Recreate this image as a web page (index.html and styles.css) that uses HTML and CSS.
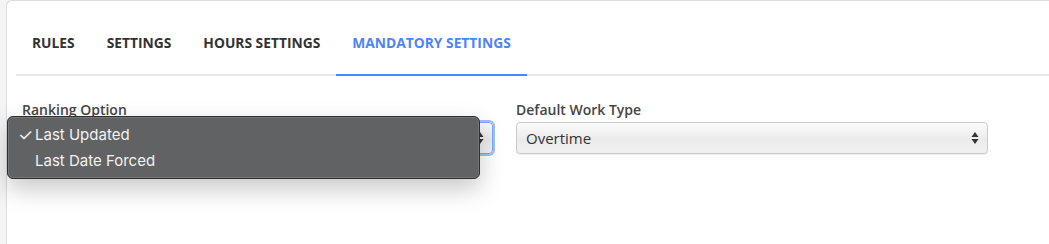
FILE: index.html
```html
<!DOCTYPE html>
<html lang="en">
<head>
    <meta charset="UTF-8">
    <title>Mandatory Settings</title>
    <link rel="stylesheet" href="styles.css">
</head>
<body>
    <div class="card">
        <ul class="tabs">
            <li>Rules</li>
            <li>Settings</li>
            <li>Hours Settings</li>
            <li class="active">Mandatory Settings</li>
        </ul>
        <div class="form-row">
            <div class="field">
                <label>Ranking Option</label>
                <div class="select focused">
                    <span>Last Updated</span>
                    <svg class="arrows" width="8" height="14" viewBox="0 0 8 14"><path d="M4 1 L7.5 6 H0.5 Z M4 13 L7.5 8 H0.5 Z" fill="#333"/></svg>
                </div>
            </div>
            <div class="field">
                <label>Default Work Type</label>
                <div class="select">
                    <span>Overtime</span>
                    <svg class="arrows" width="8" height="14" viewBox="0 0 8 14"><path d="M4 1 L7.5 6 H0.5 Z M4 13 L7.5 8 H0.5 Z" fill="#333"/></svg>
                </div>
            </div>
        </div>

        <!-- open native popup of the first select -->
        <div class="popup">
            <div class="popup-item"><span class="check">✓</span>Last Updated</div>
            <div class="popup-item"><span class="check"></span>Last Date Forced</div>
        </div>
    </div>
</body>
</html>
```

FILE: styles.css
```css
body {
    margin: 0;
    background-color: #f4f4f4;
    font-family: "Open Sans", Arial, sans-serif;
    color: #333;
}
.card {
    position: relative;
    margin-left: 6px;
    height: 243px;
    background: #ffffff;
    border-top: 1px solid #dcdcdc;
    border-left: 1px solid #dcdcdc;
    border-top-left-radius: 6px;
    padding-left: 9px;
}
.tabs {
    list-style: none;
    margin: 0;
    padding: 0;
    display: flex;
    border-bottom: 2px solid #e9e9e9;
}
.tabs li {
    padding: 33px 16px 22px;
    font-size: 13.8px;
    line-height: 18px;
    font-weight: 700;
    text-transform: uppercase;
    color: #333;
    margin-bottom: -2px;
    border-bottom: 2px solid transparent;
}
.tabs li.active {
    color: #4d84fb;
    border-bottom-color: #4d84fb;
}
.form-row {
    display: grid;
    grid-template-columns: 471px 472px;
    gap: 23px;
    padding: 24px 0 0 6px;
}
.field label {
    display: block;
    font-size: 14px;
    line-height: 20px;
    font-weight: 600;
    color: #454545;
    margin-bottom: 2px;
}
.select {
    height: 30px;
    display: flex;
    align-items: center;
    justify-content: space-between;
    padding: 0 8px 0 9px;
    border: 1px solid #cbcbcb;
    border-radius: 4px;
    background: linear-gradient(#fbfbfb, #ebebeb 55%, #f2f2f2);
    box-shadow: 0 1px 1px rgba(0, 0, 0, 0.08);
    font-size: 15px;
    color: #333;
}
.select.focused {
    border-color: #7aa7f5;
    box-shadow: 0 0 0 2px #9cc0fb;
}
.arrows {
    display: block;
}
.popup {
    position: absolute;
    left: 0;
    top: 115px;
    width: 473px;
    height: 63px;
    padding-top: 5px;
    box-sizing: border-box;
    background: #616263;
    border: 1px solid #2e2e2e;
    border-radius: 6px;
    box-shadow: inset 0 0 0 1px #767778, 0 10px 24px rgba(0, 0, 0, 0.22);
    font-family: Inter, "Liberation Sans", sans-serif;
    font-size: 15px;
    color: #f2f2f2;
}
.popup-item {
    height: 26px;
    line-height: 26px;
    display: flex;
}
.check {
    width: 17px;
    padding-left: 10px;
    font-size: 17px;
}
```
